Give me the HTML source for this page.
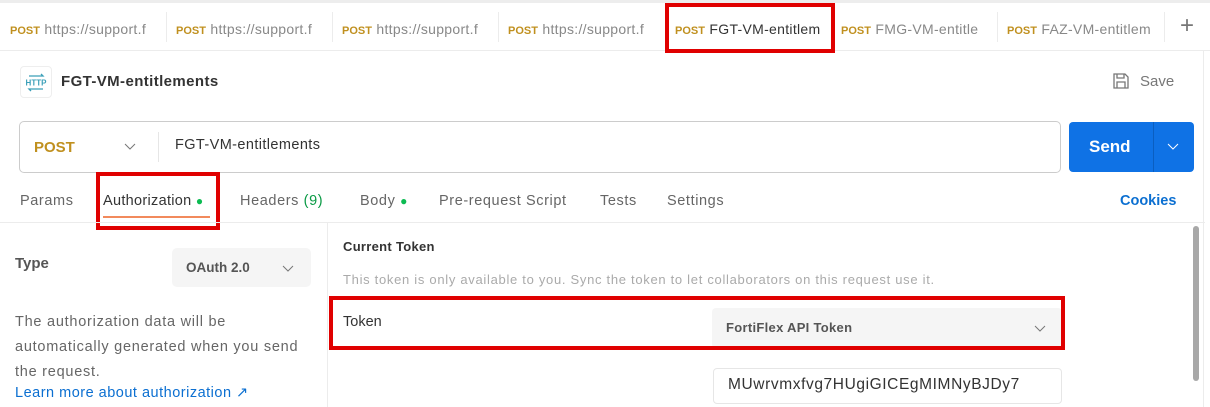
<!DOCTYPE html>
<html><head><meta charset="utf-8"><style>
*{margin:0;padding:0;box-sizing:border-box}
body{width:1210px;height:407px;overflow:hidden;background:#fff;font-family:"Liberation Sans",sans-serif;color:#333;position:relative}
.a{position:absolute;white-space:nowrap}
.post{color:#c0901f;font-weight:bold;font-size:11px}
.turl{color:#888;font-size:14px;letter-spacing:.3px}
.sep{position:absolute;top:12px;width:1px;height:30px;background:#ececec}
.red{position:absolute;border:4px solid #e00000}
.tab{font-size:14.5px;color:#666;letter-spacing:.6px;top:193px}
</style></head><body>
<div class="a" style="left:0;top:0;width:1210px;height:3px;background:#ededed"></div>
<div class="a" style="left:0;top:50px;width:1210px;height:1px;background:#ececec"></div>

<div class="a" style="left:10px;top:21px;width:150px;overflow:hidden"><span class="post">POST</span> <span class="turl">https://support.f</span></div>
<div class="sep" style="left:166px"></div>
<div class="a" style="left:176px;top:21px;width:150px;overflow:hidden"><span class="post">POST</span> <span class="turl">https://support.f</span></div>
<div class="sep" style="left:332px"></div>
<div class="a" style="left:342px;top:21px;width:150px;overflow:hidden"><span class="post">POST</span> <span class="turl">https://support.f</span></div>
<div class="sep" style="left:498px"></div>
<div class="a" style="left:508px;top:21px;width:150px;overflow:hidden"><span class="post">POST</span> <span class="turl">https://support.f</span></div>
<div class="a" style="left:675px;top:21px;width:155px;overflow:hidden"><span class="post">POST</span> <span class="turl" style="color:#333">FGT-VM-entitlem</span></div>
<div class="a" style="left:841px;top:21px;width:150px;overflow:hidden"><span class="post">POST</span> <span class="turl">FMG-VM-entitle</span></div>
<div class="sep" style="left:997px"></div>
<div class="a" style="left:1007px;top:21px;width:150px;overflow:hidden"><span class="post">POST</span> <span class="turl">FAZ-VM-entitlem</span></div>
<div class="sep" style="left:1164px"></div>
<div class="a" style="left:1180px;top:12px;font-size:24px;color:#777;font-weight:300">+</div>
<div class="red" style="left:665px;top:3px;width:170px;height:50px"></div>

<div class="a" style="left:20px;top:66px;width:32px;height:32px;border:1px solid #eee;border-radius:4px">
<svg width="30" height="30" viewBox="0 0 30 30"><path d="M8 9h14l-2-2M22 22H8l2 2" stroke="#3a9fb8" stroke-width="1.3" fill="none"/><text x="15" y="18.5" font-size="8" text-anchor="middle" fill="#3a9fb8" font-family="Liberation Sans" font-weight="bold">HTTP</text></svg></div>
<div class="a" style="left:61px;top:73px;font-size:15px;font-weight:bold;color:#333;letter-spacing:.4px">FGT-VM-entitlements</div>
<svg class="a" style="left:1112px;top:72px" width="18" height="18" viewBox="0 0 18 18"><path d="M2 2h11l3 3v11H2z M5 2v4h7V2 M5 16v-6h8v6" stroke="#777" stroke-width="1.3" fill="none"/></svg>
<div class="a" style="left:1140px;top:73px;font-size:15px;color:#777">Save</div>

<div class="a" style="left:19px;top:121px;width:1042px;height:52px;border:1px solid #ccc;border-radius:5px"></div>
<div class="a" style="left:34px;top:139px;font-size:15px;font-weight:bold;color:#c0901f">POST</div>
<svg class="a" style="left:124px;top:141px" width="12" height="10"><path d="M1 3l5 5 5-5" stroke="#777" fill="none"/></svg>
<div class="a" style="left:158px;top:132px;width:1px;height:30px;background:#e6e6e6"></div>
<div class="a" style="left:175px;top:137px;font-size:14.5px;color:#333;letter-spacing:.4px">FGT-VM-entitlements</div>
<div class="a" style="left:1069px;top:122px;width:125px;height:50px;background:#0f72e5;border-radius:4px"></div>
<div class="a" style="left:1153px;top:122px;width:1px;height:50px;background:#0a5ec0"></div>
<div class="a" style="left:1089px;top:137px;font-size:17px;font-weight:bold;color:#fff">Send</div>
<svg class="a" style="left:1167px;top:141px" width="12" height="10"><path d="M1 3l5 5 5-5" stroke="#fff" fill="none"/></svg>

<div class="a tab" style="left:20px">Params</div>
<div class="a tab" style="left:103px;color:#333;letter-spacing:.3px">Authorization <span style="color:#0cbb52;font-size:12px">●</span></div>
<div class="a" style="left:103px;top:216px;width:107px;height:2px;background:#f28a5c"></div>
<div class="a tab" style="left:240px">Headers <span style="color:#0a9a45">(9)</span></div>
<div class="a tab" style="left:360px">Body <span style="color:#0cbb52;font-size:12px">●</span></div>
<div class="a tab" style="left:439px">Pre-request Script</div>
<div class="a tab" style="left:600px">Tests</div>
<div class="a tab" style="left:667px">Settings</div>
<div class="a" style="left:1120px;top:193px;font-size:14.5px;font-weight:bold;color:#0b6fd1">Cookies</div>
<div class="red" style="left:96px;top:172px;width:124px;height:58px"></div>
<div class="a" style="left:0;top:222px;width:1205px;height:1px;background:#ececec"></div>
<div class="a" style="left:327px;top:223px;width:1px;height:184px;background:#ececec"></div>
<div class="a" style="left:1203px;top:51px;width:1px;height:356px;background:#ececec"></div>

<div class="a" style="left:15px;top:255px;font-size:15px;font-weight:bold;color:#555">Type</div>
<div class="a" style="left:172px;top:248px;width:139px;height:39px;background:#f5f5f5;border-radius:5px"></div>
<div class="a" style="left:186px;top:260px;font-size:13.5px;font-weight:bold;color:#555">OAuth 2.0</div>
<svg class="a" style="left:282px;top:263px" width="12" height="10"><path d="M1 3l5 5 5-5" stroke="#777" fill="none"/></svg>
<div class="a" style="left:15px;top:310px;font-size:14.5px;color:#666;line-height:25px;letter-spacing:.75px">The authorization data will be<br>automatically generated when you send<br>the request.</div>
<div class="a" style="left:15px;top:385px;font-size:14.5px;color:#0b6fd1;letter-spacing:.5px">Learn more about authorization ↗</div>

<div class="a" style="left:343px;top:239px;font-size:13px;font-weight:bold;color:#333;letter-spacing:.3px">Current Token</div>
<div class="a" style="left:343px;top:272px;font-size:13px;color:#aaa;letter-spacing:.7px">This token is only available to you. Sync the token to let collaborators on this request use it.</div>
<div class="a" style="left:712px;top:308px;width:350px;height:40px;background:#f5f5f5;border-radius:4px"></div>
<div class="a" style="left:343px;top:314px;font-size:14.5px;color:#333">Token</div>
<div class="a" style="left:726px;top:320px;font-size:13px;font-weight:bold;color:#555;letter-spacing:.3px">FortiFlex API Token</div>
<svg class="a" style="left:1034px;top:323px" width="12" height="10"><path d="M1 3l5 5 5-5" stroke="#777" fill="none"/></svg>
<div class="red" style="left:329px;top:296px;width:736px;height:54px"></div>
<div class="a" style="left:713px;top:368px;width:349px;height:36px;border:1px solid #e6e6e6;border-radius:4px"></div>
<div class="a" style="left:728px;top:376px;font-size:15.5px;color:#333;letter-spacing:.6px">MUwrvmxfvg7HUgiGICEgMIMNyBJDy7</div>
<div class="a" style="left:1193px;top:226px;width:6px;height:155px;background:#a8a8a8;border-radius:3px"></div>
</body></html>
